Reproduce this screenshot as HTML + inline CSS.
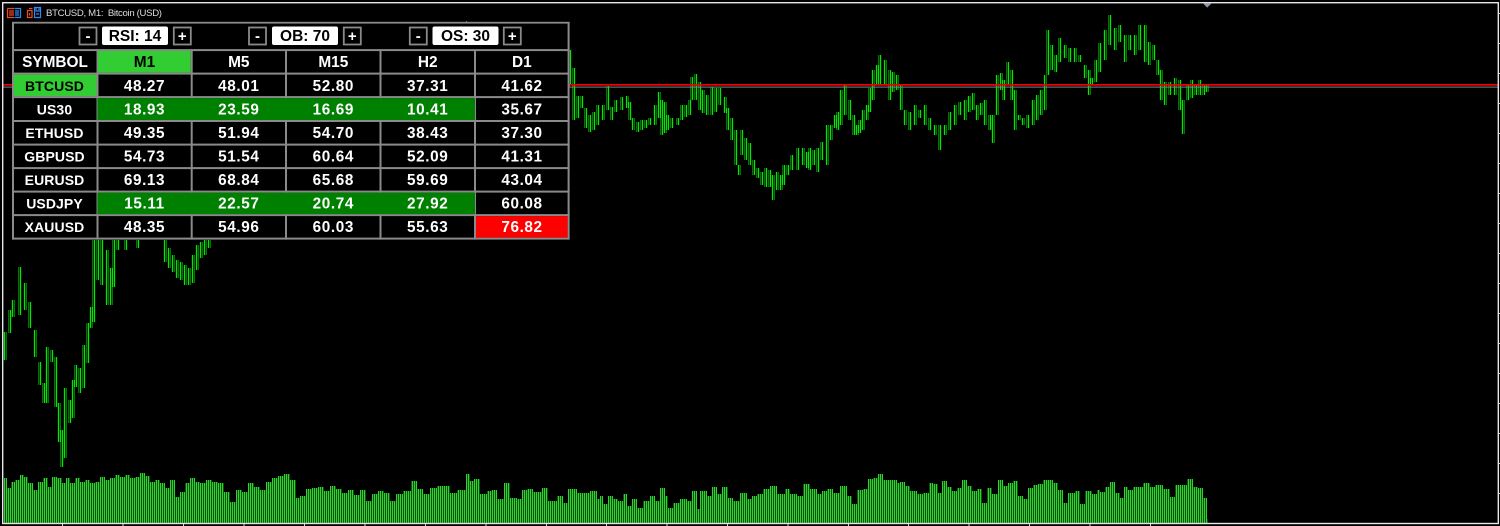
<!DOCTYPE html>
<html>
<head>
<meta charset="utf-8">
<title>BTCUSD, M1</title>
<style>
html,body{margin:0;padding:0;background:#000;width:1500px;height:526px;overflow:hidden}
svg{display:block}
text{font-family:"Liberation Sans",Arial,sans-serif;font-weight:700;text-anchor:middle;fill:#fff}
.h{font-size:15.4px}
.s{font-size:14px;letter-spacing:.1px}
.n{font-size:15.3px;letter-spacing:.6px}
.c{font-size:15.5px;fill:#000}
.b{font-size:15px}
</style>
</head>
<body>
<svg width="1500" height="526" viewBox="0 0 1500 526" xmlns="http://www.w3.org/2000/svg">
<defs>
<pattern id="p" patternUnits="userSpaceOnUse" width="2" height="4"><rect width="1" height="4" fill="#00e800"/><rect x="1" width="1" height="4" fill="#003c00"/></pattern>
<pattern id="v" patternUnits="userSpaceOnUse" width="2" height="4"><rect width="1" height="4" fill="#2ed42e"/><rect x="1" width="1" height="4" fill="#0f500f"/></pattern>
</defs>
<rect width="1500" height="526" fill="#000"/>

<!-- price bars -->
<path fill="none" stroke="url(#p)" stroke-width="3" d="M5 332V360M10 310V333M13 300V317M20 267V315M25 283V310M30 302V328M35 330V357M40 362V385M44 383V403M47 347V403M52 350V362M56 357V407M59 403V442M62 430V467M65 388V458M70 400V423M73 380V418M76 365V387M80 368V393M84 345V388M88 323V363M91 307V328M94 240V322M98 240V280M102 240V285M107 250V305M111 268V305M114 240V287M118 240V250M126 240V250M138 240V248M165 240V262M169 248V268M173 255V272M177 260V278M181 262V280M185 265V285M189 268V285M193 255V283M197 245V270M201 242V258M205 240V255M209 240V248"/>
<path fill="none" stroke="url(#p)" stroke-width="3" d="M570 50V85M574 68V120M578 96V118M582 96V108M586 108V128M590 115V132M594 112V130M598 105V125M603 105V120M608 86V110M612 107V120M616 100V112M622 97V110M627 96V108M630 102V120M633 118V130M638 122V132M642 120V130M646 120V128M650 118V125M655 105V125M659 92V118M662 100V135M665 102V133M668 115V130M672 118V128M678 118V125M682 105V120M686 105V117M690 100V115M692 77V100M696 74V100M700 82V110M703 90V113M707 95V115M712 87V115M716 88V112M720 88V105M725 97V113M728 108V130M732 118V140M736 130V165M739 165V175M742 130V155M746 138V160M750 143V165M754 160V175M758 168V178M762 172V185M766 168V187M770 170V187M773 175V200M777 172V190M781 175V190M784 165V185M788 165V175M792 155V170M798 148V170M803 148V165M807 152V168M810 148V170M814 150V165M818 148V172M822 142V160M827 125V165M831 125V140M835 115V128M838 112V130M841 90V125M845 85V115M850 100V120M854 115V135M857 125V135M860 120V133M863 110V130M867 105V120M870 88V112M873 70V100M877 65V85M880 55V85M885 60V85M890 70V100M893 72V92M897 75V90"/>
<path fill="none" stroke="url(#p)" stroke-width="3" d="M901 85V110M905 110V125M910 112V130M915 105V125M920 110V118M925 105V125M930 118V130M935 125V135M940 125V150M945 125V135M950 112V130M955 105V125M960 102V115M965 100V120M969 96V112M973 93V110M977 105V120M981 103V115M985 100V125M990 115V130M993 115V143M997 75V115M1001 73V90M1004 80V100M1008 62V85M1012 70V100M1015 90V130M1019 115V120M1023 118V125M1028 115V128M1033 100V125M1037 95V120M1041 90V115M1045 75V110M1048 30V75M1052 45V70M1056 55V72M1060 38V62M1065 45V58M1070 48V62M1075 48V62M1080 55V62M1085 65V78M1089 70V95M1092 78V85M1096 60V82M1100 43V72M1105 30V60M1110 15V45M1115 28V50M1120 25V42M1125 35V62M1130 35V50M1135 35V55M1140 25V50M1145 25V62M1149 42V65M1154 45V60M1158 60V75M1161 70V100M1165 82V105M1170 82V95M1175 78V95M1180 80V110M1183 100V134M1188 85V100M1192 80V98M1196 85V95M1200 80V95M1204 85V95M1207 85V92"/>

<!-- volume -->
<path fill="url(#v)" d="M4 523V478H7V488H11V482H15V480H20V475H24V477H28V483H33V490H38V482H43V478H48V487H52V477H57V478H62V483H66V478H70V483H75V478H80V482H85V480H90V483H95V482H100V477H105V480H110V478H115V475H120V477H125V475H130V478H135V477H140V473H145V476H150V482H155V480H160V483H165V488H170V480H175V497H180V492H185V483H190V478H195V482H200V483H206V480H212V482H218V483H224V492H230V502H236V490H242V492H248V483H254V487H260V490H266V482H272V478H278V476H284V474H290V480H296V498H300V496H306V489H312V488H318V487H324V491H330V486H336V489H342V493H348V490H354V495H360V490H366V501H372V494H378V491H384V493H390V501H396V494H403V491H411V481H417V489H423V494H430V488H437V486H445V486H450V493H457V490H463V490H466V474H470V481H474V479H480V494H487V491H492V490H497V499H504V483H510V498H517V499H522V490H527V489H533V492H542V488H548V501H557V496H563V503H568V489H577V493H583V493H590V491H597V499H600V496H603V504H608V496H613V499H618V501H623V494H627V506H632V499H637V508H643V501H650V496H655V501H660V488H665V496H668V508H673V503H680V499H687V501H692V491H697V509H700V491H707V496H712V487H717V494H722V487H728V498H733V501H740V493H747V499H752V496H757V494H763V489H770V486H777V494H785V489H790V494H797V496H803V484H810V489H817V494H822V491H827V489H833V493H840V486H847V496H852V504H857V490H863V489H868V479H873V478H878V474H883V480H890V480H897V483H900V482H905V486H910V491H917V494H923V493H929V483H933V484H938V493H942V481H947V487H952V491H957V488H962V480H967V486H972V491H977V489H982V503H987V488H992V494H998V480H1003V486H1008V483H1013V481H1018V496H1023V499H1028V488H1033V485H1038V484H1043V480H1048V480H1053V483H1058V490H1063V503H1068V493H1075V491H1080V504H1085V491H1092V494H1097V490H1100V492H1105V487H1110V482H1115V493H1120V498H1124V487H1128V490H1133V487H1138V487H1143V483H1150V487H1155V485H1163V489H1170V497H1175V485H1180V485H1187V479H1193V487H1198V488H1203V498H1207V519H1208V523Z"/>

<!-- price lines -->
<rect x="3" y="84" width="1495" height="1.7" fill="#f00000"/>
<rect x="3" y="86.6" width="1495" height="1" fill="#7c848c"/>

<!-- frame -->
<rect x="2" y="2" width="1496.5" height="1.4" fill="#e6e6e6"/>
<rect x="2" y="2" width="1.4" height="522" fill="#e6e6e6"/>
<rect x="1497.6" y="2" width="1.4" height="522" fill="#e6e6e6"/>
<rect x="2" y="522.8" width="1497" height="1.4" fill="#e6e6e6"/>
<path stroke="#d8d8d8" stroke-width="1" fill="none" d="M62.5 524V526M123 524V526M183.5 524V526M244 524V526M304.5 524V526M365 524V526M425.5 524V526M486 524V526M546.5 524V526M606.5 524V526M667 524V526M727.5 524V526M788 524V526M848.5 524V526M908.5 524V526M969 524V526M1029.5 524V526M1090 524V526M1150.5 524V526M1499 13.5H1500M1499 43.5H1500M1499 73.5H1500M1499 103.5H1500M1499 133.5H1500M1499 163.5H1500M1499 193.5H1500M1499 223.5H1500M1499 253.5H1500M1499 283.5H1500M1499 313.5H1500M1499 343.5H1500M1499 373.5H1500M1499 403.5H1500M1499 433.5H1500M1499 463.5H1500M1499 493.5H1500"/>
<path d="M1203 3.4H1211.5L1207.2 7.6Z" fill="#8c99a6"/>

<!-- title icons -->
<g fill="none" stroke-width="1.2">
<path stroke="#f04a20" d="M7.5 8.5H14M7.5 8.5V17.5H14M9 11H14M9 13H14M9 15H14"/>
<path stroke="#3088f0" d="M14.5 8.5H20.5V17.5H14.5M15 11H19M15 13H19M15 15H19"/>
<path stroke="#f04a20" d="M27.5 10.5H32V17.5H27.5ZM29 8.5H32.5M29.5 13V15.5"/>
<path stroke="#3088f0" d="M34.5 7.5H40.5V17.5H34.5ZM36 8V11H39V8M36 14H39"/>
</g>
<text x="46" y="16" textLength="116" lengthAdjust="spacing" xml:space="preserve" style="font-size:9.6px;font-weight:400;text-anchor:start;fill:#dcdcdc;white-space:pre">BTCUSD, M1:  Bitcoin (USD)</text>
<rect x="466" y="21" width="1" height="1.5" fill="#00c000"/>

<!-- table -->
<rect x="12.5" y="22.5" width="556.5" height="216.5" fill="#000"/>
<g fill="#8a8a8a">
<rect x="12" y="22" width="2" height="217.6"/>
<rect x="96.5" y="49.5" width="2" height="190.1"/>
<rect x="190.7" y="49.5" width="2" height="190.1"/>
<rect x="285" y="49.5" width="2" height="190.1"/>
<rect x="379.5" y="49.5" width="2" height="190.1"/>
<rect x="474" y="49.5" width="2" height="190.1"/>
<rect x="567.6" y="22" width="2" height="217.6"/>
<rect x="12" y="21.8" width="557.6" height="1.8"/>
<rect x="12" y="49.1" width="557.6" height="2"/>
<rect x="12" y="72.6" width="557.6" height="2"/>
<rect x="12" y="96.1" width="557.6" height="2"/>
<rect x="12" y="120" width="557.6" height="2"/>
<rect x="12" y="143.6" width="557.6" height="2"/>
<rect x="12" y="167.1" width="557.6" height="2"/>
<rect x="12" y="190.6" width="557.6" height="2"/>
<rect x="12" y="214.1" width="557.6" height="2"/>
<rect x="12" y="237.6" width="557.6" height="2"/>
</g>
<rect x="98" y="51" width="92.7" height="21.6" fill="#32cd32"/>
<rect x="14" y="74.6" width="82.5" height="21.5" fill="#32cd32"/>
<rect x="97.5" y="98.1" width="377.5" height="21.9" fill="#008000"/>
<rect x="97.5" y="192.6" width="377.5" height="21.5" fill="#008000"/>
<rect x="476" y="216.1" width="91.6" height="21.5" fill="#ff0000"/>

<!-- controls -->
<g fill="#000" stroke="#8a8a8a" stroke-width="1.8">
<rect x="79.5" y="27.5" width="17" height="17"/>
<rect x="173.8" y="27.5" width="17" height="17"/>
<rect x="249" y="27.5" width="17" height="17"/>
<rect x="343.8" y="27.5" width="17" height="17"/>
<rect x="409.8" y="27.5" width="17" height="17"/>
<rect x="503.8" y="27.5" width="17" height="17"/>
</g>
<g fill="#fff">
<rect x="102" y="26.5" width="66" height="18.5" rx="2"/>
<rect x="272" y="26.5" width="66" height="18.5" rx="2"/>
<rect x="432.5" y="26.5" width="66" height="18.5" rx="2"/>
</g>
<text class="b" x="88" y="41">-</text><text class="c" x="135" y="41">RSI: 14</text><text class="b" x="182.3" y="41">+</text>
<text class="b" x="257.5" y="41">-</text><text class="c" x="305" y="41">OB: 70</text><text class="b" x="352.3" y="41">+</text>
<text class="b" x="418.3" y="41">-</text><text class="c" x="465.5" y="41">OS: 30</text><text class="b" x="512.3" y="41">+</text>

<!-- header -->
<text class="h" x="55" y="67">SYMBOL</text>
<text class="h" x="144.5" y="67" style="fill:#000">M1</text>
<text class="h" x="238.8" y="67">M5</text>
<text class="h" x="333.3" y="67">M15</text>
<text class="h" x="427.7" y="67">H2</text>
<text class="h" x="521.8" y="67">D1</text>

<!-- rows -->
<text class="s" x="54.5" y="91" style="fill:#000">BTCUSD</text>
<text class="n" x="144.5" y="91">48.27</text><text class="n" x="238.8" y="91">48.01</text><text class="n" x="333.3" y="91">52.80</text><text class="n" x="427.7" y="91">37.31</text><text class="n" x="522" y="91">41.62</text>
<text class="s" x="54.5" y="114.5">US30</text>
<text class="n" x="144.5" y="114.5">18.93</text><text class="n" x="238.8" y="114.5">23.59</text><text class="n" x="333.3" y="114.5">16.69</text><text class="n" x="427.7" y="114.5">10.41</text><text class="n" x="522" y="114.5">35.67</text>
<text class="s" x="54.5" y="138">ETHUSD</text>
<text class="n" x="144.5" y="138">49.35</text><text class="n" x="238.8" y="138">51.94</text><text class="n" x="333.3" y="138">54.70</text><text class="n" x="427.7" y="138">38.43</text><text class="n" x="522" y="138">37.30</text>
<text class="s" x="54.5" y="161.5">GBPUSD</text>
<text class="n" x="144.5" y="161.5">54.73</text><text class="n" x="238.8" y="161.5">51.54</text><text class="n" x="333.3" y="161.5">60.64</text><text class="n" x="427.7" y="161.5">52.09</text><text class="n" x="522" y="161.5">41.31</text>
<text class="s" x="54.5" y="185">EURUSD</text>
<text class="n" x="144.5" y="185">69.13</text><text class="n" x="238.8" y="185">68.84</text><text class="n" x="333.3" y="185">65.68</text><text class="n" x="427.7" y="185">59.69</text><text class="n" x="522" y="185">43.04</text>
<text class="s" x="54.5" y="208.5">USDJPY</text>
<text class="n" x="144.5" y="208.5">15.11</text><text class="n" x="238.8" y="208.5">22.57</text><text class="n" x="333.3" y="208.5">20.74</text><text class="n" x="427.7" y="208.5">27.92</text><text class="n" x="522" y="208.5">60.08</text>
<text class="s" x="54.5" y="232">XAUUSD</text>
<text class="n" x="144.5" y="232">48.35</text><text class="n" x="238.8" y="232">54.96</text><text class="n" x="333.3" y="232">60.03</text><text class="n" x="427.7" y="232">55.63</text><text class="n" x="522" y="232">76.82</text>
</svg>
</body>
</html>
